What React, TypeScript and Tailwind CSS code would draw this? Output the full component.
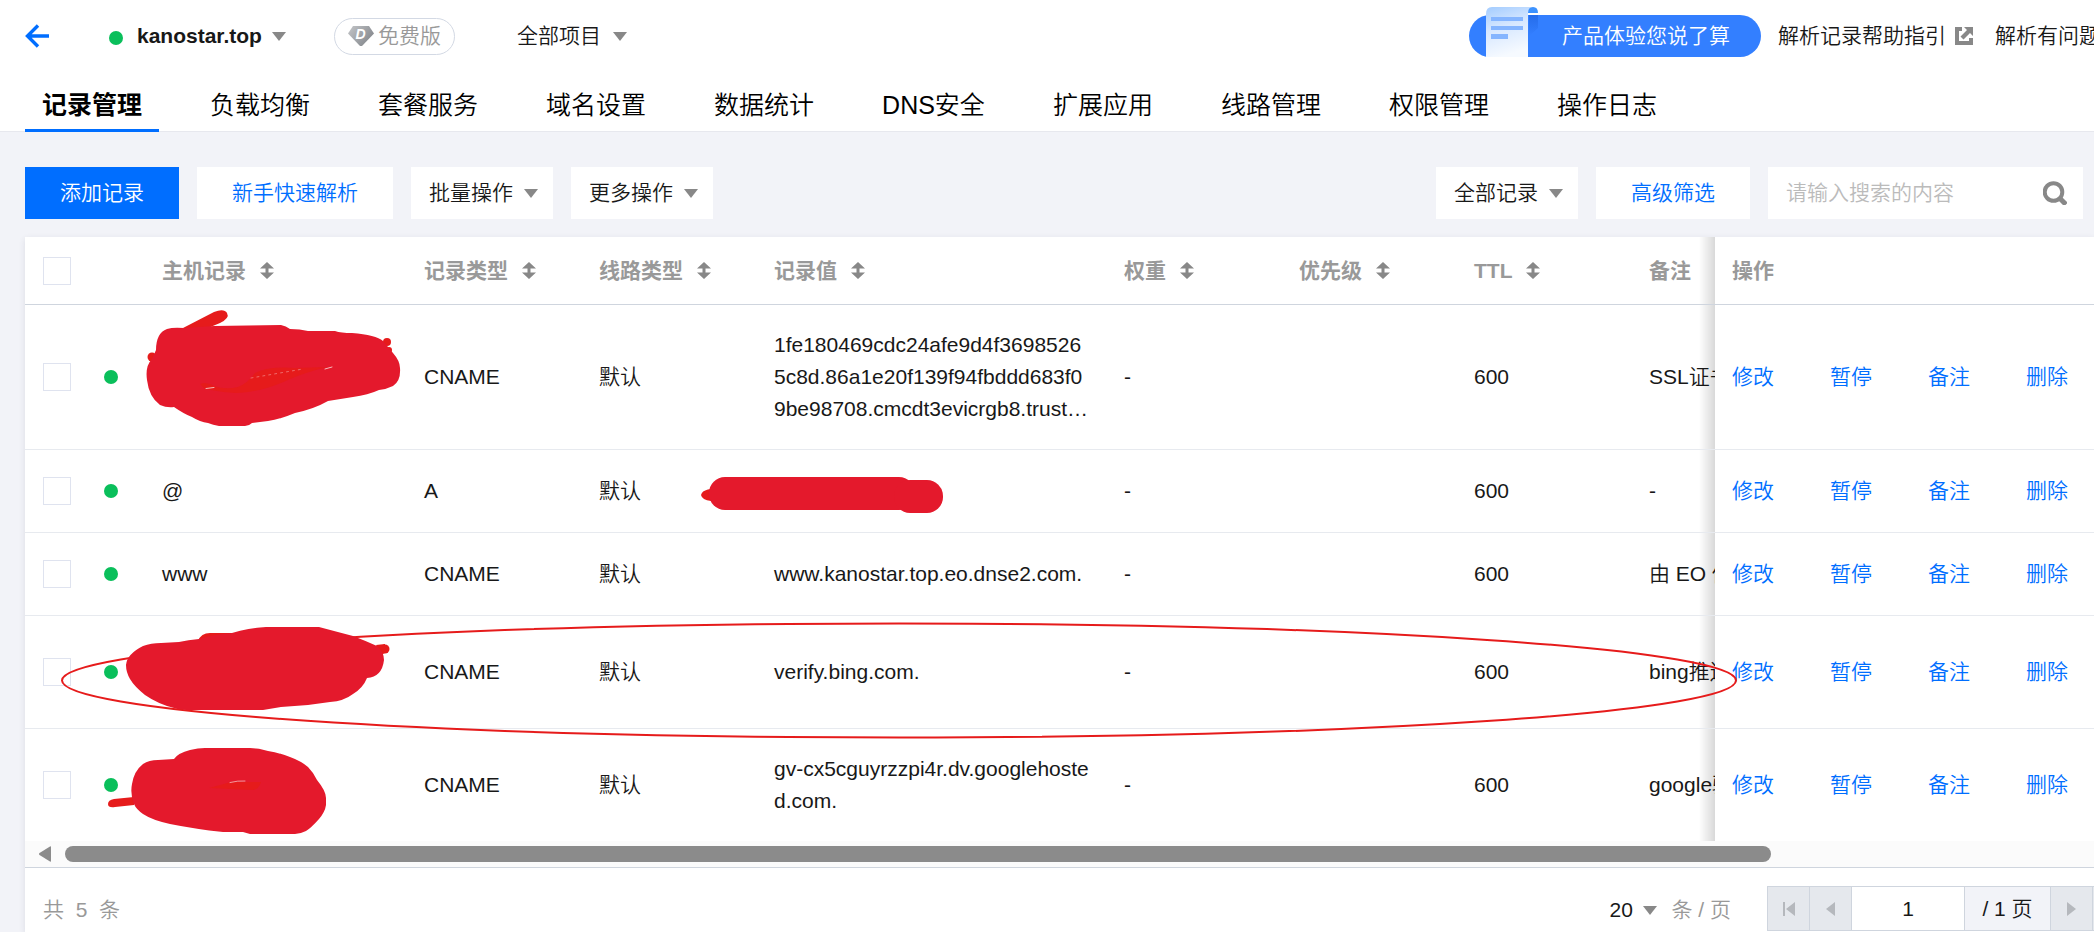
import { useState } from "react";
import type { ReactNode } from "react";

type DnsRecord = {
  id: number;
  host: string | null;
  type: string;
  line: string;
  value: string | null;
  weight: string;
  ttl: string;
  remark: string;
};

const tabs = [
  "记录管理",
  "负载均衡",
  "套餐服务",
  "域名设置",
  "数据统计",
  "DNS安全",
  "扩展应用",
  "线路管理",
  "权限管理",
  "操作日志",
];

// host / value are null when they are masked out
const records: DnsRecord[] = [
  { id: 1, host: null, type: "CNAME", line: "默认", value: "1fe180469cdc24afe9d4f36985265c8d.86a1e20f139f94fbddd683f09be98708.cmcdt3evicrgb8.trust…", weight: "-", ttl: "600", remark: "SSL证书验证" },
  { id: 2, host: "@", type: "A", line: "默认", value: null, weight: "-", ttl: "600", remark: "-" },
  { id: 3, host: "www", type: "CNAME", line: "默认", value: "www.kanostar.top.eo.dnse2.com.", weight: "-", ttl: "600", remark: "由 EO 修改" },
  { id: 4, host: null, type: "CNAME", line: "默认", value: "verify.bing.com.", weight: "-", ttl: "600", remark: "bing推送" },
  { id: 5, host: null, type: "CNAME", line: "默认", value: "gv-cx5cguyrzzpi4r.dv.googlehosted.com.", weight: "-", ttl: "600", remark: "google验证" },
];

const columns = [
  { title: "主机记录", sortable: true },
  { title: "记录类型", sortable: true },
  { title: "线路类型", sortable: true },
  { title: "记录值", sortable: true },
  { title: "权重", sortable: true },
  { title: "优先级", sortable: true },
  { title: "TTL", sortable: true },
  { title: "备注", sortable: false },
];

const Caret = ({ className = "" }: { className?: string }) => (
  <svg className={`h-[9px] w-3.5 shrink-0 ${className}`} viewBox="0 0 14 9" aria-hidden="true">
    <path d="M0 0h14L7 9z" fill="#888" />
  </svg>
);

const SortIcon = () => (
  <svg className="h-[17px] w-3.5" viewBox="0 0 14 17" aria-hidden="true">
    <path d="M7 0l7 6.500H8.500v4H14L7 17 0 10.500h5.500v-4H0z" fill="#888" />
  </svg>
);

const Dropdown = ({ label, value, className = "" }: { label: string; value: string; className?: string }) => (
  <label className="relative inline-flex items-center">
    <span className="sr-only">{label}</span>
    <select className={`cursor-pointer appearance-none bg-transparent outline-none ${className}`}>
      <option>{value}</option>
    </select>
    <Caret className="pointer-events-none absolute right-0" />
  </label>
);

const Checkbox = ({ label }: { label: string }) => (
  <input
    type="checkbox"
    aria-label={label}
    className="block size-7 appearance-none border border-[#dfe3ef] bg-white checked:bg-[#006eff]"
  />
);

const GemIcon = () => (
  <svg className="h-5 w-[26px]" viewBox="0 0 26 20" aria-hidden="true">
    <defs>
      <linearGradient id="gem" x1="0" y1="0" x2="1" y2="0.600">
        <stop offset="0" stopColor="#c4c6c9" />
        <stop offset="1" stopColor="#85888d" />
      </linearGradient>
    </defs>
    <path d="M5 0h16l5 7.500L14 20h-2L0 7.500z" fill="url(#gem)" />
    <text x="12.500" y="13" textAnchor="middle" fontSize="14" fontWeight="700" fontStyle="italic" fontFamily="Liberation Sans, sans-serif" fill="#fff">
      D
    </text>
  </svg>
);

const ExternalIcon = () => (
  <svg className="size-[18px] shrink-0" viewBox="0 0 18 18" aria-hidden="true">
    <path d="M7 0v4H4v10h10v-3h4v7H0V0z" fill="#888" />
    <path d="M9 0h9v9l-3-3-6.500 6.500L5.500 9.500 12 3z" fill="#888" />
  </svg>
);

const ScrollIcon = () => (
  <svg className="absolute bottom-0 left-[15px] h-[51px] w-[56px]" viewBox="0 0 56 51" aria-hidden="true">
    <defs>
      <linearGradient id="paper" x1="0" y1="0" x2="0.300" y2="1">
        <stop offset="0" stopColor="#a3ccff" />
        <stop offset="0.450" stopColor="#d6e7ff" />
        <stop offset="1" stopColor="#f6faff" />
      </linearGradient>
      <linearGradient id="fold" x1="0" y1="0" x2="0" y2="1">
        <stop offset="0" stopColor="#1c60dc" stopOpacity="0.600" />
        <stop offset="1" stopColor="#1c60dc" stopOpacity="0" />
      </linearGradient>
    </defs>
    <path d="M45 9h9v13l-9 8z" fill="url(#fold)" />
    <path d="M2 51V8q0-7 6-7h42q-6 0-6 7v43z" fill="url(#paper)" />
    <path d="M44 7q0-6 5-6t5 6z" fill="#3c92ff" />
    <path d="M7 11h32v4H7zM7 20h32v4H7zM7 28h17v5H7z" fill="#85b5ff" />
  </svg>
);

// red pen marks: masked hosts, masked address and the ring round the bing row
const Annotations = () => (
  <svg className="pointer-events-none absolute top-0 left-0 z-20 h-[695px] w-[2069px]" viewBox="25 237 2069 695" aria-hidden="true">
    <ellipse cx="899" cy="680.500" rx="837" ry="57" fill="none" stroke="#e61b1b" strokeWidth="2" />
    <g fill="#e61b1b">
      <path d="M183 328 214 312Q224 308 227 313T220 323L208 328z" />
      <circle cx="387" cy="342" r="4" />
      <circle cx="389" cy="350" r="3" />
      <circle cx="152" cy="357" r="4.500" />
      <path d="M701 495q1-5 10-6v12q-9-1-10-6z" />
      <path d="M198 641q3-8 12-8h24l-4 8z" />
      <circle cx="385" cy="649" r="4.500" />
      <path d="M376 645l9-1v9l-4 2z" />
      <path d="M134 797l-20 2q-6 1-6 5t7 3l19-2z" />
    </g>
    <g fill="#e4192c" strokeLinejoin="round">
      <path d="M156 350Q156 333 167 329Q173 327 184 328L214 326L281 325Q286 326 290 329Q300 329 308 331L335 331Q341 333 352 333Q376 335 383 341L393 353Q400 361 400 368Q401 381 393 386Q387 389 379 390Q368 395 353 397L328 401Q314 409 295 413Q281 419 268 421L252 423Q249 426 245 426H219Q213 425 208 423Q200 422 192 417Q184 414 174 407Q167 408 160 405Q149 397 147 380Q145 366 152 359z" />
      <rect x="709" y="477" width="206" height="33" rx="16" />
      <rect x="894" y="480" width="49" height="33" rx="16" />
      <path d="M179 642Q188 640 199 639Q216 634 232 633Q248 628 266 627H319Q334 631 353 636Q366 641 377 646Q384 652 384 660Q382 677 367 678Q363 688 353 694Q344 701 330 702L308 705L281 707L263 710H192Q180 710 174 708Q158 704 145 695Q134 686 130 679Q126 672 126 665Q127 654 143 646Q151 643 161 643z" />
      <path d="M174 759Q178 753 190 750Q198 748 205 748H250Q259 748 268 751Q280 753 290 757Q301 761 308 767Q313 772 317 780Q326 791 326 798V805Q325 812 319 819Q311 828 306 831Q300 834 295 834H250L243 832H223Q195 829 170 824Q152 820 143 814Q136 809 134 804Q130 794 132 784Q134 771 143 764Q149 760 158 760z" />
    </g>
    <g fill="#e61b1b">
      <path d="M200 384q6-3 14 2 11 4 24 1 10-4 17-14 14-7 40-5l32-1q-20 5-37 12-29 14-54 14-16-1-31-4z" />
      <path d="M209 788l22-6h30q-2 7-8 8-20-1-44-2z" />
    </g>
    <g fill="none" stroke="#f6b9b9" strokeLinecap="round">
      <path d="M206 388.500l8-1" strokeWidth="1" />
      <path d="M251 378l52-9" strokeWidth="0.500" strokeDasharray="2 4" />
      <path d="M325 369l7-2" strokeWidth="1" />
      <path d="M230 782.500q8-2 15-1.500" strokeWidth="0.800" />
    </g>
  </svg>
);

const OpsCell = ({ children, className = "" }: { children: ReactNode; className?: string }) => (
  <div className={`flex items-center before:pointer-events-none before:absolute before:inset-y-0 before:right-full before:w-4 before:bg-linear-to-l before:from-black/15 before:to-transparent ${className}`}>
    {children}
  </div>
);

const Header = ({ active, setActive }: { active: string; setActive: (tab: string) => void }) => (
  <header className="overflow-hidden bg-white">
    <div className="flex h-[72px] items-center whitespace-nowrap pl-[25px]">
      <button aria-label="返回">
        <svg className="h-6 w-6" viewBox="0 0 24 24" fill="none" stroke="#006eff" strokeWidth="3.400" aria-hidden="true">
          <path d="M13 1.500 2.500 12 13 22.500M2.500 12H24" />
        </svg>
      </button>
      <span className="mt-1 mr-3.5 ml-[60px] size-3.5 rounded-full bg-[#0abf5b]" />
      <Dropdown label="域名" value="kanostar.top" className="pr-6 font-bold" />
      <span className="ml-12 flex h-[37px] items-center gap-1 rounded-full border border-[#d3d9e4] px-[13px] text-[#999]">
        <GemIcon />
        免费版
      </span>
      <div className="ml-[62px]">
        <Dropdown label="项目" value="全部项目" className="pr-[26px]" />
      </div>
      <div className="ml-auto flex shrink-0 items-center">
        <a href="#survey" className="relative mr-[17px] flex h-[42px] items-center rounded-full bg-[#337fff] pr-[31px] pl-[93px] text-white">
          <ScrollIcon />
          产品体验您说了算
        </a>
        <a href="#guide" className="mr-[22px] flex items-center gap-[9px]">
          解析记录帮助指引
          <ExternalIcon />
        </a>
        <a href="#faq" className="-mr-1.5">
          解析有问题
        </a>
      </div>
    </div>
    <nav className="flex h-[60px] gap-[34px] border-b border-[#e7e8ee] pl-[25px]">
      {tabs.map((tab) => (
        <button
          key={tab}
          onClick={() => setActive(tab)}
          className={`h-[60px] shrink-0 border-b-[3px] px-[17px] pt-2 text-[25px] text-black ${active === tab ? "border-[#006eff] font-bold" : "border-transparent"}`}
        >
          {tab}
        </button>
      ))}
    </nav>
  </header>
);

const Toolbar = () => (
  <div className="flex gap-[18px] pr-[11px]">
    <button className="h-[52px] w-[154px] bg-[#006eff] text-white">添加记录</button>
    <button className="h-[52px] w-[196px] bg-white text-[#006eff]">新手快速解析</button>
    <button className="flex h-[52px] items-center gap-[11px] bg-white pr-[15px] pl-[18px]">
      批量操作
      <Caret />
    </button>
    <button className="flex h-[52px] items-center gap-[11px] bg-white pr-[15px] pl-[18px]">
      更多操作
      <Caret />
    </button>
    <div className="ml-auto flex h-[52px] items-center bg-white pr-[15px] pl-[18px]">
      <Dropdown label="记录筛选" value="全部记录" className="pr-[25px]" />
    </div>
    <button className="h-[52px] w-[154px] bg-white text-[#006eff]">高级筛选</button>
    <form className="flex h-[52px] w-[315px] items-center bg-white pr-4 pl-[18px]">
      <input aria-label="搜索" placeholder="请输入搜索的内容" className="min-w-0 flex-1 outline-none placeholder:text-[#bbb]" />
      <button type="button" aria-label="搜索">
        <svg className="size-6" viewBox="0 0 24 24" fill="none" stroke="#888" strokeWidth="4" aria-hidden="true">
          <circle cx="10.500" cy="11" r="8.800" />
          <path d="M17 17.500l6 6" strokeWidth="5" />
        </svg>
      </button>
    </form>
  </div>
);

const RecordTable = () => (
  <div className="overflow-hidden">
    <table className="w-full min-w-[2160px] table-fixed border-separate border-spacing-0 text-left">
      <colgroup>
        <col className="w-[61px]" />
        <col className="w-[58px]" />
        <col className="w-[262px]" />
        <col className="w-[175px]" />
        <col className="w-[175px]" />
        <col className="w-[350px]" />
        <col className="w-[175px]" />
        <col className="w-[175px]" />
        <col className="w-[175px]" />
        <col />
        <col className="w-[379px]" />
      </colgroup>
      <thead>
        <tr className="text-[#999] *:h-[68px] *:border-b *:border-[#cfd5de]">
          <th className="pl-[18px]">
            <Checkbox label="全选" />
          </th>
          <th />
          {columns.map((column) => (
            <th key={column.title} className="px-[18px] font-bold">
              {column.sortable ? (
                <button className="flex items-center gap-3.5 font-bold">
                  {column.title}
                  <SortIcon />
                </button>
              ) : (
                column.title
              )}
            </th>
          ))}
          <th className="sticky right-0 z-10 bg-white pl-[17px] font-bold">
            <OpsCell>操作</OpsCell>
          </th>
        </tr>
      </thead>
      <tbody>
        {records.map((record) => (
          <tr key={record.id} className="leading-8 *:h-[83px] *:border-b *:border-[#e7eaef] *:py-6 last:*:border-b-0">
            <td className="pl-[18px]">
              <Checkbox label={`选择记录 ${record.id}`} />
            </td>
            <td className="pl-[18px]">
              <span className="block size-3.5 rounded-full bg-[#0abf5b]" />
            </td>
            <td className="px-[18px]">{record.host ?? <div className="h-16" />}</td>
            <td className="px-[18px]">{record.type}</td>
            <td className="px-[18px]">{record.line}</td>
            <td className="pr-4 pl-[18px] break-all">{record.value}</td>
            <td className="px-[18px]">{record.weight}</td>
            <td />
            <td className="px-[18px]">{record.ttl}</td>
            <td className="overflow-hidden pl-[18px] whitespace-nowrap">{record.remark}</td>
            <td className="sticky right-0 z-10 bg-white pl-[17px]">
              <OpsCell className="gap-14 text-[#006eff]">
                <button>修改</button>
                <button>暂停</button>
                <button>备注</button>
                <button>删除</button>
              </OpsCell>
            </td>
          </tr>
        ))}
      </tbody>
    </table>
    <div className="flex h-[26px] items-center gap-3.5 bg-[#fbfbfb] pl-3.5">
      <svg className="h-4 w-3" viewBox="0 0 12 16" aria-hidden="true">
        <path d="M12 1v14q0 1-1 .5L.5 9q-1-1 0-2L11 .5q1-.5 1 .5z" fill="#8b8b8b" />
      </svg>
      <div className="h-4 w-[83%] rounded-full bg-[#8b8b8b]" />
    </div>
  </div>
);

const pagerCell = "flex h-full items-center justify-center border-l border-[#cfd5de]";

const Pager = () => (
  <div className="flex h-16 items-end justify-between border-t border-[#cfd5de] pl-[18px]">
    <p className="pb-1.5 text-[#999]">共&nbsp; 5&nbsp; 条</p>
    <div className="flex items-end">
      <div className="mr-9 flex items-center gap-3.5 pb-1.5 text-[#999]">
        <span className="text-[#181818]">
          <Dropdown label="每页条数" value="20" className="pr-6" />
        </span>
        <span>条 / 页</span>
      </div>
      <div className="flex h-[45px] border-y border-[#cfd5de]">
        <button aria-label="第一页" className={`${pagerCell} w-[42px] bg-[#e5e8ed]`}>
          <svg className="h-3.5 w-3" viewBox="0 0 12 14" aria-hidden="true">
            <path d="M0 0h2v14H0zM12 0v14L3 7z" fill="#b5b8bd" />
          </svg>
        </button>
        <button aria-label="上一页" className={`${pagerCell} w-[42px] bg-[#e5e8ed]`}>
          <svg className="h-3.5 w-[9px]" viewBox="0 0 9 14" aria-hidden="true">
            <path d="M9 0v14L0 7z" fill="#b5b8bd" />
          </svg>
        </button>
        <input aria-label="页码" defaultValue="1" className={`${pagerCell} w-[113px] bg-white text-center outline-none`} />
        <span className={`${pagerCell} w-[86px] bg-[#f2f3f8]`}>/ 1 页</span>
        <button aria-label="下一页" className={`${pagerCell} w-[42px] bg-[#e5e8ed]`}>
          <svg className="h-3.5 w-[9px]" viewBox="0 0 9 14" aria-hidden="true">
            <path d="M0 0v14l9-7z" fill="#b5b8bd" />
          </svg>
        </button>
        <span className={`${pagerCell} w-0.5 bg-[#e5e8ed]`} />
      </div>
    </div>
  </div>
);

const App = () => {
  const [active, setActive] = useState("记录管理");
  return (
    <div className="flex min-h-screen flex-col bg-[#f2f3f8] font-['Liberation_Sans','Noto_Sans_CJK_SC',sans-serif] text-[21px] leading-[30px] font-[350] text-[#181818]">
      <Header active={active} setActive={setActive} />
      <main className="flex flex-1 flex-col gap-[18px] pt-[35px] pl-[25px]">
        <Toolbar />
        <section className="relative flex-1 overflow-hidden bg-white shadow-[0_2px_6px_rgba(54,58,80,0.12)]">
          <RecordTable />
          <Pager />
          <Annotations />
        </section>
      </main>
    </div>
  );
};

export default App;
